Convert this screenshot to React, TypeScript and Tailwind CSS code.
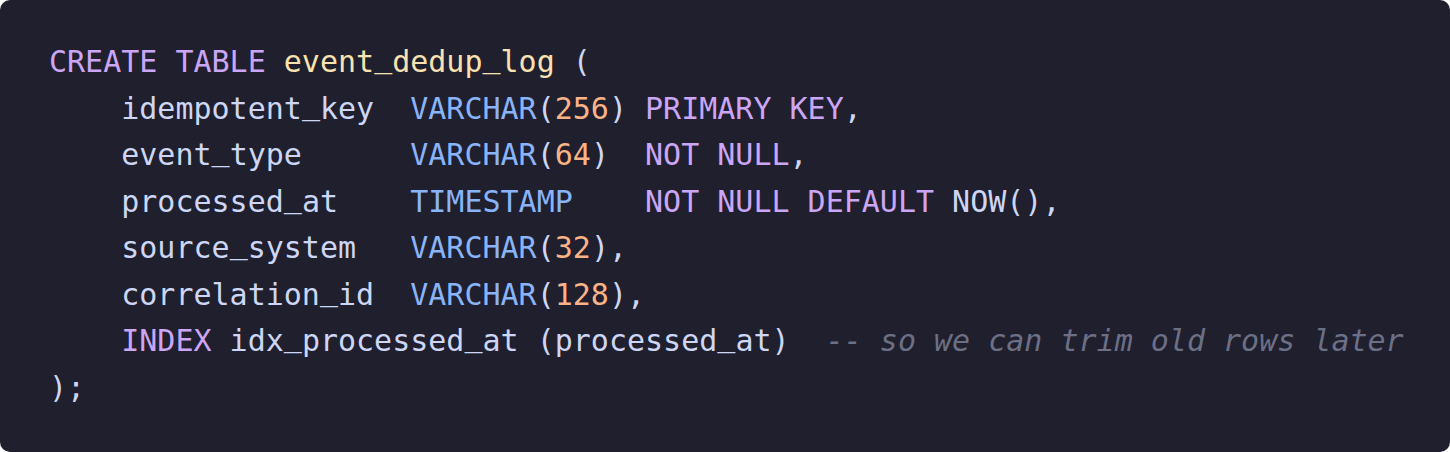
import React from 'react';

type Tok = [string, string];

const kw = 'text-[#cba6f7]';
const ty = 'text-[#89b4fa]';
const num = 'text-[#fab387]';
const tbl = 'text-[#f9e2af]';
const txt = 'text-[#cdd6f4]';
const cmt = 'text-[#6c7086] italic';

const lines: Tok[][] = [
    [['CREATE TABLE', kw], [' ', txt], ['event_dedup_log', tbl], [' (', txt]],
    [['    idempotent_key  ', txt], ['VARCHAR', ty], ['(', txt], ['256', num], [') ', txt], ['PRIMARY KEY', kw], [',', txt]],
    [['    event_type      ', txt], ['VARCHAR', ty], ['(', txt], ['64', num], [')  ', txt], ['NOT NULL', kw], [',', txt]],
    [['    processed_at    ', txt], ['TIMESTAMP', ty], ['    ', txt], ['NOT NULL DEFAULT', kw], [' NOW(),', txt]],
    [['    source_system   ', txt], ['VARCHAR', ty], ['(', txt], ['32', num], ['),', txt]],
    [['    correlation_id  ', txt], ['VARCHAR', ty], ['(', txt], ['128', num], ['),', txt]],
    [['    ', txt], ['INDEX', kw], [' idx_processed_at (processed_at)  ', txt], ['-- so we can trim old rows later', cmt]],
    [[');', txt]],
];

// underscores sit a bit higher in the reference font, nudge them up so they show
const withUnderscores = (t: string) =>
    t.split('_').map((part, k) => (
        <React.Fragment key={k}>
            {k > 0 && <span className="align-[5px] leading-none">_</span>}
            {part}
        </React.Fragment>
    ));

const App: React.FC = () => {
    return (
        <div className="min-h-screen w-full bg-white">
            <div className="w-[1450px] h-[452px] rounded-[10px] bg-[#1f1f2d] pl-[49px] pt-[39px]">
                <pre className="font-['DejaVu_Sans_Mono',monospace] text-[30px] leading-[46.5px]">
                    {lines.map((line, i) => (
                        <div key={i} className="h-[46.5px]">
                            {line.map(([t, c], j) => (
                                <span key={j} className={c}>{withUnderscores(t)}</span>
                            ))}
                        </div>
                    ))}
                </pre>
            </div>
        </div>
    );
};

export default App;
